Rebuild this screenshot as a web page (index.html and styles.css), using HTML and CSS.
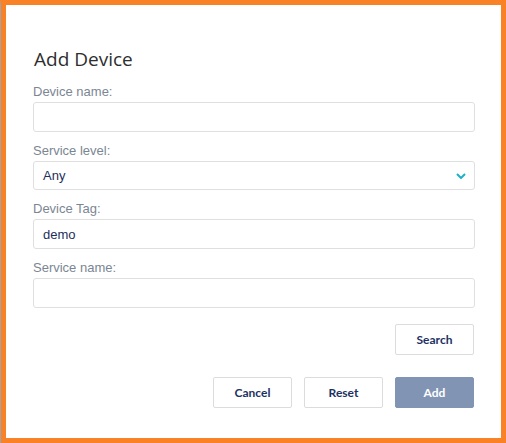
FILE: index.html
```html
<!DOCTYPE html>
<html>
<head>
<meta charset="utf-8">
<link rel="stylesheet" href="styles.css">
</head>
<body>
<div class="outer">
  <div class="frame">
    <h1 class="title">Add Device</h1>
    <div class="field">
      <label class="label">Device name:</label>
      <div class="input"></div>
    </div>
    <div class="field">
      <label class="label">Service level:</label>
      <div class="input select">
        <span class="value">Any</span>
        <svg class="chevron" width="10" height="6" viewBox="0 0 10 6"><path d="M1 1 L5 5 L9 1" fill="none" stroke="#1cb0c9" stroke-width="2"/></svg>
      </div>
    </div>
    <div class="field">
      <label class="label">Device Tag:</label>
      <div class="input"><span class="value">demo</span></div>
    </div>
    <div class="field">
      <label class="label">Service name:</label>
      <div class="input"></div>
    </div>
    <div class="search-row">
      <button class="btn">Search</button>
    </div>
    <div class="actions">
      <button class="btn">Cancel</button>
      <button class="btn">Reset</button>
      <button class="btn primary">Add</button>
    </div>
  </div>
</div>
</body>
</html>
```
FILE: styles.css
```css
html, body {
  margin: 0;
  padding: 0;
  background: #ffffff;
}
.outer {
  width: 506px;
  height: 443px;
  box-sizing: border-box;
  border-left: 1px solid #9aa6b4;
  border-top: 5px solid #f98226;
}
.frame {
  height: 100%;
  box-sizing: border-box;
  border-left: 5px solid #f98226;
  border-right: 5px solid #f98226;
  border-bottom: 5px solid #f98226;
  background: #ffffff;
  padding: 42px 26px 0 27px;
  display: flex;
  flex-direction: column;
}
.title {
  margin: 0 0 12px 1px;
  font-family: "Open Sans", sans-serif;
  font-weight: 400;
  font-size: 19px;
  line-height: 25px;
  color: #2e2e2e;
}
.field {
  display: flex;
  flex-direction: column;
  margin-bottom: 11px;
}
.label {
  font-family: "Liberation Sans", Arial, sans-serif;
  font-size: 13px;
  line-height: 16px;
  color: #7b8693;
  margin-bottom: 2px;
}
.input {
  height: 30px;
  box-sizing: border-box;
  border: 1px solid #dfdfdf;
  border-radius: 3px;
  display: flex;
  align-items: center;
  padding: 0 8px 0 9px;
}
.input.select {
  height: 29px;
  justify-content: space-between;
}
.value {
  font-family: "Liberation Sans", Arial, sans-serif;
  font-size: 13px;
  color: #1d2f5c;
}
.chevron {
  display: block;
}
.search-row {
  display: flex;
  justify-content: flex-end;
  margin-top: 5px;
  padding-right: 1px;
}
.actions {
  display: flex;
  justify-content: flex-end;
  gap: 12px;
  margin-top: 22px;
  padding-right: 1px;
}
.btn {
  width: 79px;
  height: 31px;
  box-sizing: border-box;
  border: 1px solid #dcdcdc;
  border-radius: 2px;
  background: #ffffff;
  font-family: Lato, sans-serif;
  font-weight: 700;
  font-size: 12px;
  color: #1d3163;
  padding: 0;
}
.btn.primary {
  background: #8294b4;
  border-color: #8294b4;
  color: #ffffff;
}
```
